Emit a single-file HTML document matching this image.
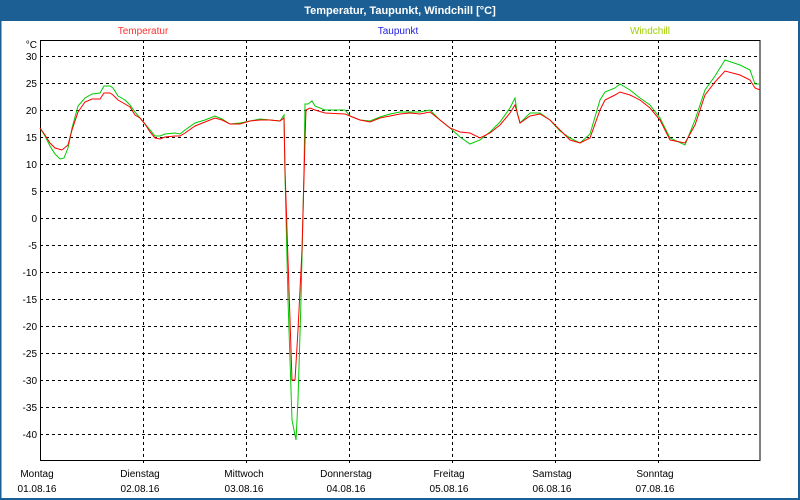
<!DOCTYPE html>
<html><head><meta charset="utf-8"><style>
body{margin:0;width:800px;height:500px;overflow:hidden;background:#fff;font-family:"Liberation Sans",Tahoma,sans-serif}
</style></head><body>
<svg width="800" height="500" xmlns="http://www.w3.org/2000/svg" style="display:block">
<rect x="0" y="0" width="800" height="500" fill="#fff"/>
<rect x="0" y="0" width="800" height="21" fill="#1c5f95"/>
<rect x="0" y="0" width="1.5" height="500" fill="#1c5f95"/>
<rect x="798" y="0" width="2" height="500" fill="#1c5f95"/>
<rect x="0" y="498" width="800" height="2" fill="#1c5f95"/>
<text x="400" y="14" font-size="11" font-weight="bold" fill="#fff" text-anchor="middle" font-family="Liberation Sans, sans-serif">Temperatur, Taupunkt, Windchill [°C]</text>
<g font-size="10" font-family="Liberation Sans, sans-serif" text-anchor="middle">
<text x="143" y="34" fill="#ff3030">Temperatur</text>
<text x="398" y="34" fill="#2020e0">Taupunkt</text>
<text x="650" y="34" fill="#a0d000">Windchill</text>
</g>
<g stroke="#000" stroke-width="1" stroke-dasharray="3,3" fill="none">
<line x1="40" y1="56.5" x2="760" y2="56.5"/><line x1="40" y1="83.5" x2="760" y2="83.5"/>
<line x1="40" y1="110.5" x2="760" y2="110.5"/><line x1="40" y1="137.5" x2="760" y2="137.5"/>
<line x1="40" y1="164.5" x2="760" y2="164.5"/><line x1="40" y1="191.5" x2="760" y2="191.5"/>
<line x1="40" y1="218.5" x2="760" y2="218.5"/><line x1="40" y1="245.5" x2="760" y2="245.5"/>
<line x1="40" y1="272.5" x2="760" y2="272.5"/><line x1="40" y1="299.5" x2="760" y2="299.5"/>
<line x1="40" y1="326.5" x2="760" y2="326.5"/><line x1="40" y1="353.5" x2="760" y2="353.5"/>
<line x1="40" y1="380.5" x2="760" y2="380.5"/><line x1="40" y1="407.5" x2="760" y2="407.5"/>
<line x1="40" y1="434.5" x2="760" y2="434.5"/>
<line x1="143.5" y1="40" x2="143.5" y2="465"/><line x1="246.5" y1="40" x2="246.5" y2="465"/>
<line x1="349.5" y1="40" x2="349.5" y2="465"/><line x1="452.5" y1="40" x2="452.5" y2="465"/>
<line x1="555.5" y1="40" x2="555.5" y2="465"/><line x1="658.5" y1="40" x2="658.5" y2="465"/>
</g>
<rect x="40.5" y="40.5" width="719.5" height="420" fill="none" stroke="#000" stroke-width="1"/>
<g font-size="10" fill="#000" text-anchor="end" font-family="Liberation Sans, sans-serif">
<text x="37" y="48">°C</text>
<text x="37" y="60">30</text><text x="37" y="87">25</text><text x="37" y="114">20</text><text x="37" y="141">15</text>
<text x="37" y="168">10</text><text x="37" y="195">5</text><text x="37" y="222">0</text><text x="37" y="249">-5</text>
<text x="37" y="276">-10</text><text x="37" y="303">-15</text><text x="37" y="330">-20</text><text x="37" y="357">-25</text>
<text x="37" y="384">-30</text><text x="37" y="411">-35</text><text x="37" y="438">-40</text>
</g>
<g font-size="10" fill="#000" text-anchor="middle" font-family="Liberation Sans, sans-serif">
<text x="37" y="477">Montag</text><text x="37" y="492">01.08.16</text>
<text x="140" y="477">Dienstag</text><text x="140" y="492">02.08.16</text>
<text x="244" y="477">Mittwoch</text><text x="244" y="492">03.08.16</text>
<text x="346" y="477">Donnerstag</text><text x="346" y="492">04.08.16</text>
<text x="449" y="477">Freitag</text><text x="449" y="492">05.08.16</text>
<text x="552" y="477">Samstag</text><text x="552" y="492">06.08.16</text>
<text x="655" y="477">Sonntag</text><text x="655" y="492">07.08.16</text>
</g>
<polyline fill="none" stroke="#00cc00" stroke-width="1" points="40,128 45,136 50,146 55,154 60,159 64,158 68,148 72,128 78,106 85,98 92,94 100,93 104,86 110,86 113,88 118,96 125,100 130,105 135,112 140,118 145,124 150,130 155,136 160,136 165,134 175,133 180,134 185,130 195,123 205,120 215,116 222,119 230,124 240,123 250,121 260,119 270,120 280,121 284,115 285,175 288,300 292,420 296,440 298,400 301,300 304,170 305,104 308,104 312,101 315,106 325,110 345,110 350,116 360,120 370,121 380,117 390,114 400,112 410,112 420,112 430,110 440,120 450,128 460,137 470,144 480,140 490,132 500,122 510,108 515,98 517,112 520,123 530,113 540,113 550,120 560,131 570,138 580,143 590,134 600,100 605,92 615,88 620,84 630,90 640,98 650,105 660,118 670,138 685,145 695,120 705,90 715,76 725,60 740,65 750,70 755,84 760,84"/>
<polyline fill="none" stroke="#ff0000" stroke-width="1" points="40,128 45,135 50,143 55,148 62,150 68,145 72,130 78,112 85,102 92,99 100,99 104,93 110,93 113,95 118,100 125,104 130,107 135,115 140,118 145,124 150,132 155,138 160,139 165,137 175,136 180,136 185,133 195,126 205,122 215,118 222,120 230,124 240,124 250,121 260,120 270,120 280,121 284,118 285,170 288,260 292,380 295,380 298,330 302,250 305,140 306,110 310,108 315,110 325,113 345,114 350,116 360,120 370,122 380,118 390,116 400,114 410,113 420,114 430,112 440,120 450,128 460,132 470,133 480,138 490,133 500,125 510,113 515,105 517,112 520,123 530,116 540,114 550,120 560,130 570,140 580,143 590,138 600,110 605,100 615,95 620,92 630,95 640,100 650,108 660,120 670,140 685,143 695,125 705,95 715,82 725,71 740,75 750,80 755,88 760,90"/>
</svg>
</body></html>
